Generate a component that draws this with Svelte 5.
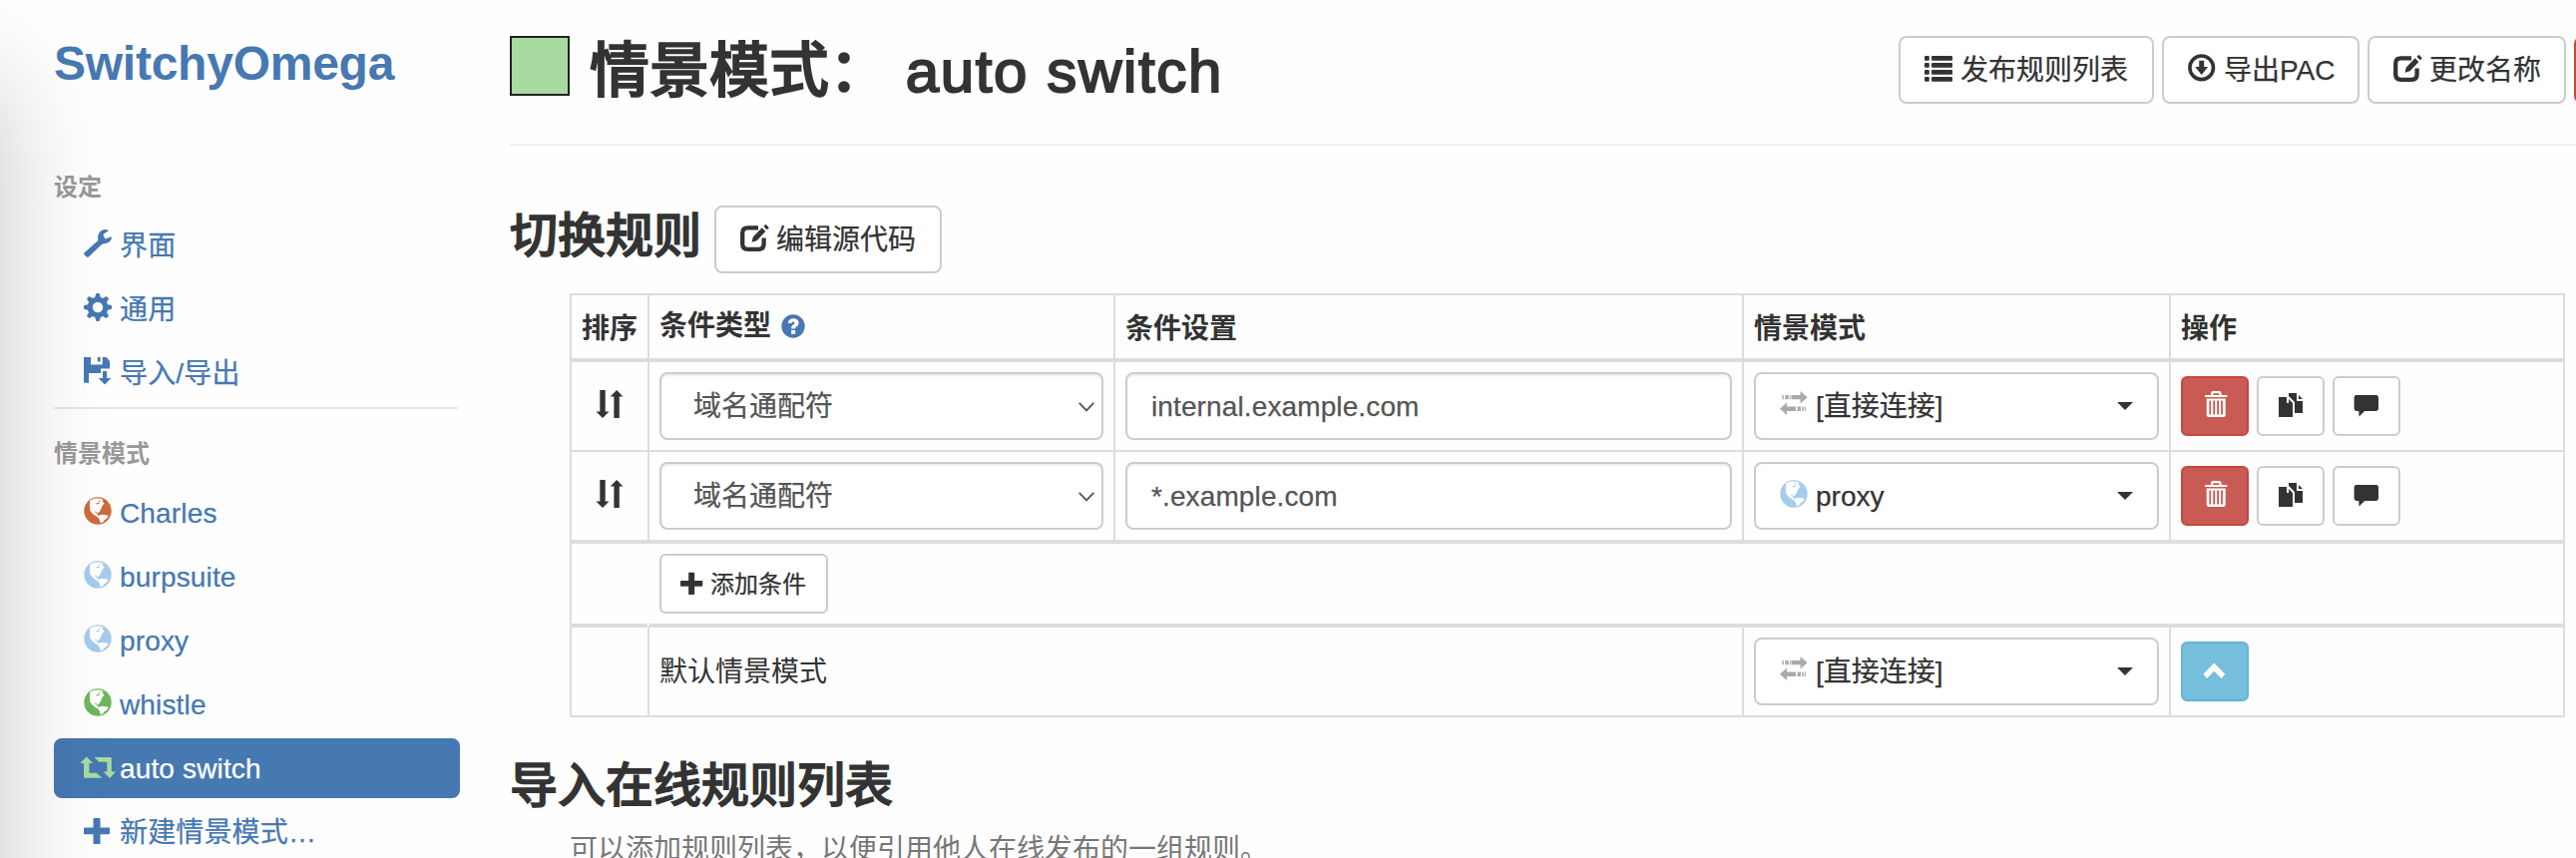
<script>
  const settings = [
    { icon: 'wrench', label: '界面' },
    { icon: 'cog', label: '通用' },
    { icon: 'save', label: '导入/导出' }
  ];
  const profiles = [
    { icon: 'globe', label: 'Charles', color: '#cd6a3e' },
    { icon: 'globe', label: 'burpsuite', color: '#a5cbed' },
    { icon: 'globe', label: 'proxy', color: '#a5cbed' },
    { icon: 'globe', label: 'whistle', color: '#6fb65e' },
    { icon: 'retweet', label: 'auto switch', color: '#a6dba0', active: true },
    { icon: 'plus', label: '新建情景模式…' }
  ];
  const actions = [
    { icon: 'list', label: '发布规则列表', width: 256 },
    { icon: 'download', label: '导出PAC', width: 198 },
    { icon: 'edit', label: '更改名称', width: 199 },
    { icon: 'trash', label: '删除', width: 144, danger: true }
  ];
  const rules = [
    { type: '域名通配符', pattern: 'internal.example.com', icon: 'direct', profile: '[直接连接]' },
    { type: '域名通配符', pattern: '*.example.com', icon: 'globe', profile: 'proxy' }
  ];
  const teeth = [0, 45, 90, 135, 180, 225, 270, 315];
</script>

{#snippet icon(name, size = 28, color = 'currentColor')}
  <svg class="icon" width={size} height={size} viewBox={name === 'trash' || name === 'copy' || name === 'comment' || name === 'up' ? '0 0 24 24' : '0 0 28 28'} style:color={color} fill="currentColor" aria-hidden="true">
    {#if name === 'wrench'}
      <path d="M.6 23.2 14.4 11C13 5.4 16.4-.2 22 .1c1.3.1 2 .5 2.8 1.1l-5.5 3.9L21.4 9.6l6.4-2.3c.6 3.8-3.1 7.2-8.1 7L18 15 5 27.3q-1.2 1.1-2.2.1L.5 25.2q-.9-1 .1-2z" />
    {:else if name === 'cog'}
      <circle cx="14" cy="14" r="7.8" fill="none" stroke="currentColor" stroke-width="5.2" />
      {#each teeth as a}
        <path d="M11 5 12.1.8Q12.3 0 13 0h2q.7 0 .9.8L17 5z" transform={`rotate(${a} 14 14)`} />
      {/each}
    {:else if name === 'save'}
      <path d="M0 0h7v7.5h11.7V0h3.8L26 4v7.5h-9V16H5v9.7H1q-1 0-1-1zM13.8 0h2.8v4.5h-2.8zM19 14h4v7h4.2L21 27.4 14.8 21H19z" />
    {:else if name === 'globe'}
      <circle cx="14" cy="14" r="13.7" />
      <path fill="#fff" d="M6.2 3.5 10 1.8l5-.4 4.2 1.2-.6 1.6 2 2.6-2 2-1.2 3-1.7 3.2-2.3 1.8.8 2 1.4 1.6-.5.6-3.1-1.8-3.1-2.1-2.5-3.2-.6-5z" />
      <path fill="#fff" d="M15 18.6l4-.8 5.6 1-1.3 2.6-2.4 1.6-2.2 2.7-2 .5-.9-3.2-1.4-2.6z" />
      <path d="M12.3 6.4l2.6-.9.9 1.2-2.6.9zM14.6 3.9l2-.3v.8l-1.9.4zM10.8 14.2l1.7.7 1.3 2.2-1.6-.6z" />
    {:else if name === 'retweet'}
      <path d="M2.7 4.5 9.3 11H5.4v9.7h7.4l5.5 5H1.2Q0 25.7 0 24.5V11h-3.7zM10.5 5h16q1.3 0 1.3 1.3v13.2H32L26 26l-6.4-6.5h3.7V9.8h-8z" />
    {:else if name === 'plus'}
      <path d="M10.5 2h5q1 0 1 1v8.6H25q1 0 1 1v4.7q0 1-1 1h-8.5V27q0 1-1 1h-5q-1 0-1-1v-8.7H1q-1 0-1-1v-4.7q0-1 1-1h8.5V3q0-1 1-1z" />
    {:else if name === 'list'}
      {#each [2, 9, 16, 23] as y}
        <rect x="0" {y} width="4.8" height="4.8" rx="1" />
        <rect x="7" {y} width="21" height="4.8" rx="1" />
      {/each}
    {:else if name === 'download'}
      <circle cx="13.7" cy="13.8" r="11.8" fill="none" stroke="currentColor" stroke-width="3.6" />
      <path d="M11.2 6.8h5V13h4l-6.5 8L7.2 13h4z" />
    {:else if name === 'edit'}
      <path d="M18 4.3H7.5Q2.2 4.3 2.2 9.5v11q0 5.3 5.3 5.3h10.8q5.3 0 5.3-5.3v-6" fill="none" stroke="currentColor" stroke-width="4.3" />
      <path d="m11.5 18.7 1.3-5.2 8.9-9.2 3.7 3.6-8.8 9.3zM23.4 2.9 25 1.3q.5-.5 1 0l2.4 2.4q.5.5 0 1l-1.6 1.6z" />
    {:else if name === 'sort'}
      <path d="M4.3 0h5.4v21.5h3.8L7 28 .5 21.5h3.8zM21.1 0l6.4 6.5h-3.7V28h-5.4V6.5h-3.7z" />
    {:else if name === 'question'}
      <circle cx="14" cy="14" r="13.6" />
      <path fill="#fff" d="M7.8 10.6C8 6.8 10.6 5 14.2 5c3.8 0 6.3 2 6.3 5.1 0 2.4-1.3 3.6-2.7 4.6-1 .7-1.3 1.1-1.3 2.3h-4.7c0-2.9.7-3.8 2.5-5.1.9-.6 1.4-1 1.4-1.8s-.6-1.3-1.5-1.3c-1.2 0-1.8.7-1.9 1.8zM11.8 18.8h4.7v4.2h-4.7z" />
    {:else if name === 'direct'}
      <path d="M2.3 5h1.5v4.3H2.3zM5.3 5h3.4v4.3H5.3zM9.8 5h1v4.3h-1zM11.6 5h8.9V1l7.2 6.2-7.2 6.2V9.3h-8.9zM0 18.8l7-6.2v4h9V21H7v4zM17.6 16.6H21V21h-3.4zM22.2 16.6h1.6V21h-1.6zM24.9 16.6H26V21h-1.1z" />
    {:else if name === 'trash'}
      <path d="M2 2h6V.2Q8.2-2 10.2-2h6.2q2 0 2.2 2.2V2h5.7v2H2zM10.2 2h6.2V.2h-6.2zM3.7 5.4h19v16.3q0 2.3-2.3 2.3H6q-2.3 0-2.3-2.3zM6.4 7.5v14h1.7v-14zM10.3 7.5v14h1.9v-14zM14.2 7.5v14h1.9v-14zM18.1 7.5v14h1.8v-14z" fill-rule="evenodd" />
    {:else if name === 'copy'}
      <path d="M0 4h8v6h6v14H0zM10 6l4 4h-4zM10 0h8v8h6v12h-8V9l-6-6zM20 2l4 4h-4z" />
    {:else if name === 'comment'}
      <path d="M2 2h19.6Q24 2 24 4.4v11.2q0 2.4-2.4 2.4H10.2l-5.7 5.5L4.3 18H2Q-.4 18-.4 15.6V4.4Q-.4 2 2 2z" />
    {:else if name === 'up'}
      <path d="M11.3 4.6 22.3 15.8 18.6 20l-7.3-7.2L4 20 .3 15.8z" />
    {/if}
  </svg>
{/snippet}

{#snippet picker(name, label, color)}
  <button class="btn picker">
    {@render icon(name, 28, color)}<span>{label}</span><i class="caret"></i>
  </button>
{/snippet}

<div class="page">
  <aside>
    <h1>SwitchyOmega</h1>
    <nav>
      <h4>设定</h4>
      {#each settings as item}
        <a href="#settings">{@render icon(item.icon)}<span>{item.label}</span></a>
      {/each}
      <hr />
      <h4 class="second">情景模式</h4>
      {#each profiles as item}
        <a href="#profile" class:active={item.active}>{@render icon(item.icon, 28, item.color)}<span>{item.label}</span></a>
      {/each}
    </nav>
  </aside>

  <main>
    <header>
      <i class="swatch"></i>
      <h2>情景模式： <span class="latin">auto switch</span></h2>
      <div class="toolbar">
        {#each actions as a}
          <button class="btn" class:danger={a.danger} style:width={`${a.width}px`}>{@render icon(a.icon)}<span>{a.label}</span></button>
        {/each}
      </div>
    </header>

    <div class="section-title">
      <h3>切换规则</h3>
      <button class="btn">{@render icon('edit')}<span>编辑源代码</span></button>
    </div>

    <table>
      <colgroup><col class="c1" /><col class="c2" /><col class="c3" /><col class="c4" /><col class="c5" /></colgroup>
      <thead>
        <tr>
          <th>排序</th>
          <th><div class="with-help"><span>条件类型</span>{@render icon('question', 24, '#4678b2')}</div></th>
          <th>条件设置</th>
          <th>情景模式</th>
          <th>操作</th>
        </tr>
      </thead>
      <tbody>
        {#each rules as rule}
          <tr class="rule">
            <td class="sort">{@render icon('sort')}</td>
            <td>
              <div class="field select"><span>{rule.type}</span>
                <svg width="16" height="10" viewBox="0 0 16 10" fill="none" stroke="#555" stroke-width="1.8"><path d="M.7.8 8 8.4 15.3.8" /></svg>
              </div>
            </td>
            <td><div class="field">{rule.pattern}</div></td>
            <td>{@render picker(rule.icon, rule.profile, rule.icon === 'globe' ? '#a5cbed' : '#aaa')}</td>
            <td>
              <div class="ops">
                <button class="btn small danger">{@render icon('trash', 24)}</button>
                <button class="btn small">{@render icon('copy', 24)}</button>
                <button class="btn small">{@render icon('comment', 24)}</button>
              </div>
            </td>
          </tr>
        {/each}
      </tbody>
      <tbody>
        <tr class="add">
          <td class="blank"></td>
          <td colspan="4" class="joined"><button class="btn add-btn">{@render icon('plus', 24)}<span>添加条件</span></button></td>
        </tr>
      </tbody>
      <tbody>
        <tr class="default">
          <td></td>
          <td colspan="2"><span class="default-label">默认情景模式</span></td>
          <td>{@render picker('direct', '[直接连接]', '#aaa')}</td>
          <td><button class="btn small info">{@render icon('up', 24)}</button></td>
        </tr>
      </tbody>
    </table>

    <h3 class="import">导入在线规则列表</h3>
    <p>可以添加规则列表，以便引用他人在线发布的一组规则。</p>
  </main>
  <div class="edge-shadow"></div>
</div>

<style>
  :global(body) { margin: 0; background: #fefefe; }
  .page, .page :global(*) { box-sizing: border-box; }
  .page {
    position: relative;
    display: flex;
    gap: 50px;
    width: 2582px;
    height: 860px;
    padding-left: 54px;
    overflow: hidden;
    background: #fefefe;
    color: #333;
    font: 28px/40px "Liberation Sans", "Noto Sans CJK SC", sans-serif;
  }
  h1, h2, h3, h4, p { margin: 0; }
  .edge-shadow {
    position: absolute;
    left: -300px;
    top: 85px;
    width: 300px;
    height: 1100px;
    box-shadow: 0 0 110px rgba(0, 0, 0, 0.22);
    pointer-events: none;
  }
  .icon { flex: none; display: block; overflow: visible; }

  aside { width: 407px; flex: none; }
  h1 { padding-top: 36px; font-size: 48px; line-height: 56px; letter-spacing: -0.25px; color: #4678b2; }
  h4 { margin-top: 76px; height: 40px; margin-bottom: 8px; font-size: 24px; color: #999; }
  h4.second { margin: 25px 0 9px; }
  hr { margin: 0 2px 0 0; border: 0; height: 2px; background: #e5e5e5; }
  nav a {
    display: flex;
    align-items: flex-start;
    height: 60px;
    margin-bottom: 4px;
    padding: 10px 30px;
    border-radius: 8px;
    color: #4678b2;
    text-decoration: none;
    white-space: nowrap;
  }
  nav a span { margin-top: 1px; letter-spacing: 0.15px; -webkit-text-stroke: 0.25px; }
  nav a .icon, nav a :global(.icon) { margin: 4px 8px 0 0; }
  nav a.active { background: #4678b2; color: #fff; }

  main { width: 2071px; flex: none; }
  header {
    display: flex;
    align-items: flex-start;
    width: 2213px;
    height: 146px;
    padding-top: 36px;
    border-bottom: 2px solid #eee;
  }
  .swatch { width: 60px; height: 60px; flex: none; background: #a8dba0; border: 2px solid #222; }
  h2 { margin: 3px 0 0 20px; font-size: 60px; font-weight: 500; line-height: 66px; white-space: pre; -webkit-text-stroke: 1.6px #333; }
  .latin { letter-spacing: 1.65px; -webkit-text-stroke: 2px #333; }
  .toolbar { display: flex; gap: 8px; margin-left: auto; }
  .btn {
    display: flex;
    align-items: flex-start;
    height: 68px;
    padding: 12px 24px;
    border: 2px solid #ccc;
    border-radius: 8px;
    background: #fff;
    color: #333;
    font: inherit;
    white-space: nowrap;
  }
  .btn > :global(.icon) { margin: 4px 8px 0 0; }
  .btn > span { margin-top: 1px; -webkit-text-stroke: 0.25px; }
  .danger { background: #c85c54; border-color: #c44840; color: #fff; }
  .info { background: #77bddc; border-color: #65b4d8; color: #fff; }

  .section-title { display: flex; align-items: flex-start; gap: 13px; padding: 60px 0 0; height: 148px; }
  h3 { font-size: 48px; font-weight: 500; line-height: 53px; -webkit-text-stroke: 1.3px #333; }
  .section-title h3 { margin-top: 4px; }

  table {
    width: 2000px;
    margin-left: 60px;
    table-layout: fixed;
    border-collapse: separate;
    border-spacing: 0;
    border-top: 2px solid #ddd;
    border-right: 2px solid #ddd;
  }
  .c1 { width: 78px; }
  .c2 { width: 467px; }
  .c3 { width: 630px; }
  .c4 { width: 428px; }
  .c5 { width: 395px; }
  th, td { padding: 0 10px; border-left: 2px solid #ddd; border-bottom: 2px solid #ddd; text-align: left; vertical-align: middle; }
  th { height: 67px; padding-top: 4px; border-bottom-width: 4px; white-space: nowrap; }
  .with-help { display: flex; align-items: center; gap: 10px; margin-top: -5px; }
  .rule td { height: 90px; }
  .rule:last-child td { height: 92px; border-bottom-width: 4px; }
  td.sort :global(.icon) { margin: -5px auto 0 14px; }
  .add td { height: 84px; border-bottom-width: 4px; }
  .default td { height: 90px; }
  .default-label { display: block; padding-top: 2px; }
  td.joined { border-left-color: transparent; }
  .field {
    height: 68px;
    padding: 13px 24px 11px;
    border: 2px solid #ccc;
    border-radius: 8px;
    background: #fff;
    box-shadow: inset 0 2px 2px rgba(0, 0, 0, 0.075);
    color: #555;
    letter-spacing: 0.12px;
    -webkit-text-stroke: 0.25px;
  }
  .select { display: flex; align-items: center; justify-content: space-between; padding: 1px 7px 0 32px; letter-spacing: 0; }
  .picker { width: 406px; }
  .caret { margin: 16px 0 0 auto; border: 8px solid transparent; border-top-color: #333; border-bottom: 0; }
  .ops { display: flex; gap: 8px; }
  .btn.small { width: 68px; height: 60px; padding: 13px 20px; border-radius: 6px; }
  .btn.small > :global(.icon) { margin: 2px 0 0; }
  .add-btn { width: 169px; height: 60px; padding: 10px 20px; border-radius: 6px; font-size: 24px; line-height: 36px; }
  .add-btn > :global(.icon) { margin: 5px 6px 0 -1px; }
  .import { margin-top: 42px; }
  p { margin: 18px 0 0 60px; color: #777; }
</style>
